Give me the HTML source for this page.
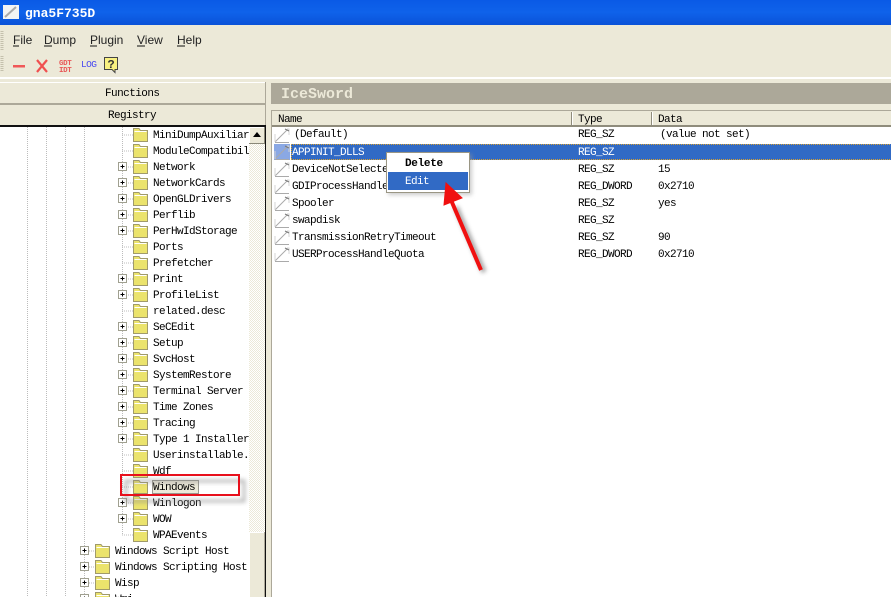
<!DOCTYPE html>
<html><head><meta charset="utf-8"><style>
html,body{margin:0;padding:0;width:891px;height:597px;overflow:hidden;background:#ece9d8}
svg{display:block}
text{font-family:"Liberation Mono",monospace;font-size:11px;letter-spacing:-.6px;fill:#000}
.m text{font-family:"Liberation Sans",sans-serif;font-size:12px;letter-spacing:0;fill:#222}
</style></head><body>
<svg width="891" height="597" viewBox="0 0 891 597" xmlns="http://www.w3.org/2000/svg">
<defs>
<linearGradient id="tb" x1="0" y1="0" x2="0" y2="1"><stop offset="0" stop-color="#0a5ae6"/><stop offset=".5" stop-color="#0f62ea"/><stop offset="1" stop-color="#0a52d8"/></linearGradient>
<filter id="bl" x="-30%" y="-30%" width="160%" height="160%"><feGaussianBlur stdDeviation="2"/></filter>
<pattern id="ck" width="2" height="2" patternUnits="userSpaceOnUse"><rect width="2" height="2" fill="#fff"/><rect width="1" height="1" fill="#ece9d8"/><rect x="1" y="1" width="1" height="1" fill="#ece9d8"/></pattern>
<g id="f"><path d="M.5 -4.500V-6.500H6L7.500 -4.500H14.500V6.500H.5Z" fill="#ebe36c" stroke="#a09a6c"/><path d="M1.500 -3.500H13.500" stroke="#fff"/></g>
<g id="p"><rect x=".5" y="-4.500" width="8" height="8" fill="#fff" stroke="#a0a090"/><path d="M2.500 -.5H6.500M4.500 -2.500V1.500" stroke="#000"/></g>
<g id="r"><path d="M1 7.500H15" stroke="#aaa"/><path d="M1 7L13 -5" stroke="#aaa" fill="none"/><path d="M1 7V-1M13 -6H15V0" stroke="#d4d4d4" fill="none"/><path d="M11 -6L15 -4" stroke="#777"/></g>
</defs>

<!-- title bar -->
<rect width="891" height="25" fill="url(#tb)"/>
<rect x="3" y="5" width="16" height="14" fill="#f4f4f4"/><path d="M5 17L16 7" stroke="#aaa" stroke-width="2"/>
<text x="25" y="17" style="font-size:13px;font-weight:bold;letter-spacing:0;fill:#fff">gna5F735D</text>

<!-- menu -->
<path d="M2 31V50M2 56V72" stroke="#c4c0ac" stroke-width="3" stroke-dasharray="1 1"/>
<g class="m">
<text x="13" y="44">File</text><path d="M13 46H19" stroke="#111"/>
<text x="44" y="44">Dump</text><path d="M44 46H52" stroke="#111"/>
<text x="90" y="44">Plugin</text><path d="M90 46H97" stroke="#111"/>
<text x="137" y="44">View</text><path d="M137 46H145" stroke="#111"/>
<text x="177" y="44">Help</text><path d="M177 46H185" stroke="#111"/>
</g>

<!-- toolbar -->
<rect x="13" y="65" width="12" height="2.500" fill="#f05858"/>
<path d="M37 60L47 72M47 60L37 72" stroke="#f05050" stroke-width="2.200"/>
<text x="59" y="65" style="font-size:7.500px;letter-spacing:-.4px;font-weight:bold;fill:#e85858">GDT</text>
<text x="59" y="72" style="font-size:7.500px;letter-spacing:-.4px;font-weight:bold;fill:#e85858">IDT</text>
<text x="81" y="67" style="font-size:9.500px;letter-spacing:-.6px;fill:#4a4af0">LOG</text>
<path d="M104.500 57.500H117.500V69.500H115V72.500L112 69.500H104.500Z" fill="#f8f080" stroke="#444"/>
<text x="107.500" y="68" style="font-size:12px;letter-spacing:0;font-weight:bold;fill:#333">?</text>
<rect y="77" width="891" height="2" fill="#fff"/>

<!-- tabs -->
<rect x="0" y="82" width="266" height="1" fill="#fff"/>
<rect x="0" y="103" width="266" height="2" fill="#aca899"/>
<rect x="265" y="82" width="1" height="45" fill="#aca899"/>
<text x="105" y="96" style="letter-spacing:-.55px">Functions</text>
<text x="108" y="118">Registry</text>
<rect x="0" y="125" width="266" height="2" fill="#111"/>

<!-- tree -->
<rect x="0" y="127" width="249" height="470" fill="#fff"/>
<rect x="249" y="127" width="16" height="405" fill="url(#ck)"/>
<rect x="249" y="532" width="16" height="65" fill="#ece9d8"/>
<path d="M249.500 597V532.500H264" stroke="#fff" fill="none"/>
<rect x="264" y="532" width="1" height="65" fill="#aca899"/>
<rect x="265" y="127" width="1" height="470" fill="#111"/>
<g stroke="#bcbcbc" stroke-dasharray="1 1" fill="none">
<path d="M27.500 127V597M46.500 127V597M65.500 127V597M84.500 127V597"/>
<path d="M122.500 127V535"/>
<path d="M122 135H133M122 151H133M122 167H133M122 183H133M122 199H133M122 215H133M122 231H133M122 247H133M122 263H133M122 279H133M122 295H133M122 311H133M122 327H133M122 343H133M122 359H133M122 375H133M122 391H133M122 407H133M122 423H133M122 439H133M122 455H133M122 471H133M122 487H133M122 503H133M122 519H133M122 535H133"/>
<path d="M85 551H95M85 567H95M85 583H95M85 599H95"/>
</g>
<use href="#f" x="133" y="135"/><use href="#f" x="133" y="151"/><use href="#f" x="133" y="167"/><use href="#f" x="133" y="183"/><use href="#f" x="133" y="199"/><use href="#f" x="133" y="215"/><use href="#f" x="133" y="231"/><use href="#f" x="133" y="247"/><use href="#f" x="133" y="263"/><use href="#f" x="133" y="279"/><use href="#f" x="133" y="295"/><use href="#f" x="133" y="311"/><use href="#f" x="133" y="327"/><use href="#f" x="133" y="343"/><use href="#f" x="133" y="359"/><use href="#f" x="133" y="375"/><use href="#f" x="133" y="391"/><use href="#f" x="133" y="407"/><use href="#f" x="133" y="423"/><use href="#f" x="133" y="439"/><use href="#f" x="133" y="455"/><use href="#f" x="133" y="471"/><use href="#f" x="133" y="487"/><use href="#f" x="133" y="503"/><use href="#f" x="133" y="519"/><use href="#f" x="133" y="535"/>
<use href="#f" x="95" y="551"/><use href="#f" x="95" y="567"/><use href="#f" x="95" y="583"/><use href="#f" x="95" y="599"/>
<use href="#p" x="118" y="167"/><use href="#p" x="118" y="183"/><use href="#p" x="118" y="199"/><use href="#p" x="118" y="215"/><use href="#p" x="118" y="231"/><use href="#p" x="118" y="279"/><use href="#p" x="118" y="295"/><use href="#p" x="118" y="327"/><use href="#p" x="118" y="343"/><use href="#p" x="118" y="359"/><use href="#p" x="118" y="375"/><use href="#p" x="118" y="391"/><use href="#p" x="118" y="407"/><use href="#p" x="118" y="423"/><use href="#p" x="118" y="439"/><use href="#p" x="118" y="503"/><use href="#p" x="118" y="519"/>
<use href="#p" x="80" y="551"/><use href="#p" x="80" y="567"/><use href="#p" x="80" y="583"/><use href="#p" x="80" y="599"/>
<rect x="152" y="480" width="47" height="14" fill="#ece9d8"/>
<rect x="152.500" y="480.500" width="46" height="13" fill="none" stroke="#444" stroke-dasharray="1 1"/>
<text x="153" y="138">MiniDumpAuxiliar</text>
<text x="153" y="154">ModuleCompatibil</text>
<text x="153" y="170">Network</text>
<text x="153" y="186">NetworkCards</text>
<text x="153" y="202">OpenGLDrivers</text>
<text x="153" y="218">Perflib</text>
<text x="153" y="234">PerHwIdStorage</text>
<text x="153" y="250">Ports</text>
<text x="153" y="266">Prefetcher</text>
<text x="153" y="282">Print</text>
<text x="153" y="298">ProfileList</text>
<text x="153" y="314">related.desc</text>
<text x="153" y="330">SeCEdit</text>
<text x="153" y="346">Setup</text>
<text x="153" y="362">SvcHost</text>
<text x="153" y="378">SystemRestore</text>
<text x="153" y="394">Terminal Server</text>
<text x="153" y="410">Time Zones</text>
<text x="153" y="426">Tracing</text>
<text x="153" y="442">Type 1 Installer</text>
<text x="153" y="458">Userinstallable.</text>
<text x="153" y="474">Wdf</text>
<text x="153" y="490">Windows</text>
<text x="153" y="506">Winlogon</text>
<text x="153" y="522">WOW</text>
<text x="153" y="538">WPAEvents</text>
<text x="115" y="554">Windows Script Host</text>
<text x="115" y="570">Windows Scripting Host</text>
<text x="115" y="586">Wisp</text>
<text x="115" y="602">Wmi</text>
<rect x="249" y="127" width="16" height="16" fill="#ece9d8"/>
<path d="M249.500 143V127.500H264.500" stroke="#fff" fill="none"/>
<path d="M249 143.500H265M264.500 127V143" stroke="#8a8878" fill="none"/>
<path d="M257 132L261 137H253Z" fill="#000"/>

<!-- red rectangle -->
<rect x="126" y="481" width="118" height="20" fill="none" stroke="#888" stroke-width="3" filter="url(#bl)" opacity=".6"/>
<rect x="121" y="475" width="118" height="20" fill="none" stroke="#e8101c" stroke-width="2"/>

<!-- right header -->
<rect x="271" y="83" width="620" height="21" fill="#aca899"/>
<text x="281" y="98" style="font-size:15px;letter-spacing:0;font-weight:bold;fill:#ece9d8">IceSword</text>

<!-- list -->
<rect x="271" y="111" width="620" height="486" fill="#fff"/>
<rect x="271" y="110" width="620" height="1" fill="#aca899"/>
<rect x="271" y="110" width="1" height="487" fill="#aca899"/>
<rect x="272" y="111" width="619" height="15" fill="#ece9d8"/>
<rect x="272" y="125" width="619" height="2" fill="#8f8c7c"/>
<path d="M571.500 112V125M651.500 112V125" stroke="#8f8c7c"/>
<path d="M572.500 112V125M652.500 112V125" stroke="#fff"/>
<text x="278" y="122">Name</text><text x="578" y="122">Type</text><text x="658" y="122">Data</text>
<rect x="274" y="144" width="16" height="16" fill="#8aa8e4"/>
<rect x="291" y="144" width="600" height="16" fill="#316ac5"/>
<path d="M291 144.500H891M291 159.500H891M291.500 144V160" stroke="#d8a030" stroke-dasharray="1 1"/>
<use href="#r" x="274" y="135"/><use href="#r" x="274" y="152"/><use href="#r" x="274" y="169"/><use href="#r" x="274" y="186"/><use href="#r" x="274" y="203"/><use href="#r" x="274" y="220"/><use href="#r" x="274" y="237"/><use href="#r" x="274" y="254"/>
<text x="294" y="137">(Default)</text>
<text x="292" y="155" style="fill:#fff">APPINIT_DLLS</text>
<text x="292" y="172">DeviceNotSelectedTimeout</text>
<text x="292" y="189">GDIProcessHandleQuota</text>
<text x="292" y="206">Spooler</text>
<text x="292" y="223">swapdisk</text>
<text x="292" y="240">TransmissionRetryTimeout</text>
<text x="292" y="257">USERProcessHandleQuota</text>
<text x="578" y="137">REG_SZ</text>
<text x="578" y="155" style="fill:#fff">REG_SZ</text>
<text x="578" y="172">REG_SZ</text>
<text x="578" y="189">REG_DWORD</text>
<text x="578" y="206">REG_SZ</text>
<text x="578" y="223">REG_SZ</text>
<text x="578" y="240">REG_SZ</text>
<text x="578" y="257">REG_DWORD</text>
<text x="660" y="137">(value not set)</text>
<text x="658" y="172">15</text>
<text x="658" y="189">0x2710</text>
<text x="658" y="206">yes</text>
<text x="658" y="240">90</text>
<text x="658" y="257">0x2710</text>

<!-- context menu -->
<rect x="388" y="154" width="84" height="41" fill="#999" filter="url(#bl)" opacity=".5"/>
<rect x="386" y="152" width="84" height="41" fill="#fff"/>
<rect x="386.500" y="152.500" width="83" height="40" fill="none" stroke="#9a9684"/>
<text x="405" y="166" style="font-weight:bold;letter-spacing:-.3px">Delete</text>
<rect x="388" y="172" width="80" height="18" fill="#316ac5"/>
<text x="405" y="184" style="fill:#fff">Edit</text>

<!-- arrow -->
<path d="M484 272L456 207" stroke="#666" stroke-width="5" filter="url(#bl)" opacity=".6"/>
<path d="M481 270L451 200" stroke="#f01010" stroke-width="4"/>
<path d="M446 183L462 198L444 205Z" fill="#f01010" stroke="#f01010"/>
</svg>
</body></html>
